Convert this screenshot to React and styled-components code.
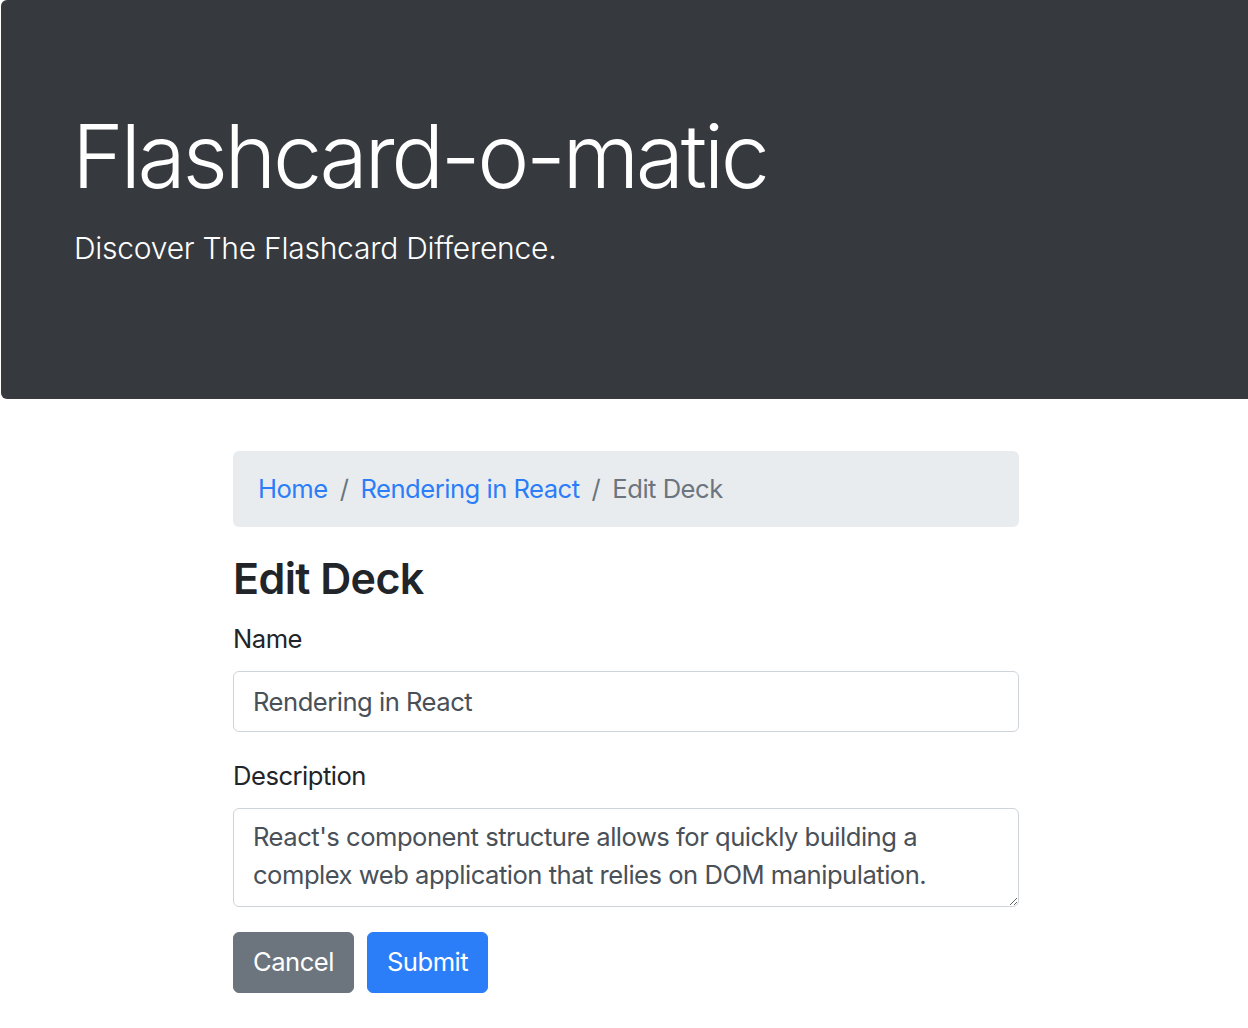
import React from 'react';
import styled, { createGlobalStyle } from 'styled-components';

const GlobalStyle = createGlobalStyle`
  html, body {
    margin: 0;
    padding: 0;
    background: #fff;
    overflow-x: hidden;
  }
  body {
    font-family: Inter, "Noto Sans", "Liberation Sans", sans-serif;
    font-size: 25.6px;
    line-height: 1.5;
    letter-spacing: -0.5px;
    color: #212529;
  }
  * { box-sizing: border-box; }
`

const Jumbotron = styled.header`
  margin-left: 1px;
  width: 1260px;
  background-color: #363a3f;
  color: #fff;
  border-radius: 6px;
  padding: 104px 73px 103px;
`
const Title = styled.h1`
  margin: 0 0 16px -2px;
  font-size: 88px;
  font-weight: 300;
  line-height: 1.2;
  letter-spacing: -3.4px;
`
const Lead = styled.p`
  margin: 0 0 25px;
  font-size: 30px;
  font-weight: 300;
  letter-spacing: -0.25px;
`
const Container = styled.main`
  width: 786px;
  margin: 52px 0 0 233px;
`
const Breadcrumb = styled.nav`
  display: flex;
  align-items: center;
  background: #e9ecef;
  border-radius: 6px;
  padding: 19px 25px;
  margin-bottom: 25.6px;
`
const Crumb = styled.a`
  color: ${p => (p.$active ? '#6c757d' : '#2c7ef8')};
  text-decoration: none;
  cursor: pointer;
`
const Sep = styled.span`
  color: #6c757d;
  padding: 0 12px;
`
const Heading = styled.h2`
  margin: 0 0 16px;
  font-size: 43px;
  font-weight: 600;
  line-height: 1.2;
  letter-spacing: -0.6px;
`
const Group = styled.div`
  margin-bottom: 25.6px;
`
const Label = styled.label`
  display: block;
  margin-bottom: 12px;
`
const fieldStyles = `
  display: block;
  width: 100%;
  font-family: inherit;
  font-size: 25.6px;
  line-height: 1.5;
  letter-spacing: -0.5px;
  color: #495057;
  background: #fff;
  border: 1px solid #ced4da;
  border-radius: 6px;
  padding: 9px 19px;
  margin: 0;
`
const Input = styled.input`
  ${fieldStyles}
  height: 61px;
`
const TextArea = styled.textarea`
  ${fieldStyles}
  height: 99px;
  resize: vertical;
`
const Actions = styled.div`
  display: flex;
  gap: 13px;
`
const Button = styled.button`
  font-family: inherit;
  font-size: 25.6px;
  line-height: 1.5;
  letter-spacing: -0.5px;
  color: #fff;
  background: ${p => (p.$variant === 'primary' ? '#2c7ef8' : '#6c757d')};
  border: 1px solid ${p => (p.$variant === 'primary' ? '#2c7ef8' : '#6c757d')};
  border-radius: 6px;
  padding: 9px 19px;
  height: 61px;
  cursor: pointer;
`

export default function App() {
  return (
    <>
      <GlobalStyle />
      <Jumbotron>
        <Title>Flashcard-o-matic</Title>
        <Lead>Discover The Flashcard Difference.</Lead>
      </Jumbotron>
      <Container>
        <Breadcrumb>
          <Crumb>Home</Crumb>
          <Sep>/</Sep>
          <Crumb>Rendering in React</Crumb>
          <Sep>/</Sep>
          <Crumb $active>Edit Deck</Crumb>
        </Breadcrumb>
        <Heading>Edit Deck</Heading>
        <form>
          <Group>
            <Label htmlFor="name">Name</Label>
            <Input id="name" defaultValue="Rendering in React" />
          </Group>
          <Group>
            <Label htmlFor="description">Description</Label>
            <TextArea
              id="description"
              defaultValue="React's component structure allows for quickly building a complex web application that relies on DOM manipulation."
            />
          </Group>
          <Actions>
            <Button type="button">Cancel</Button>
            <Button type="button" $variant="primary">Submit</Button>
          </Actions>
        </form>
      </Container>
    </>
  );
}
